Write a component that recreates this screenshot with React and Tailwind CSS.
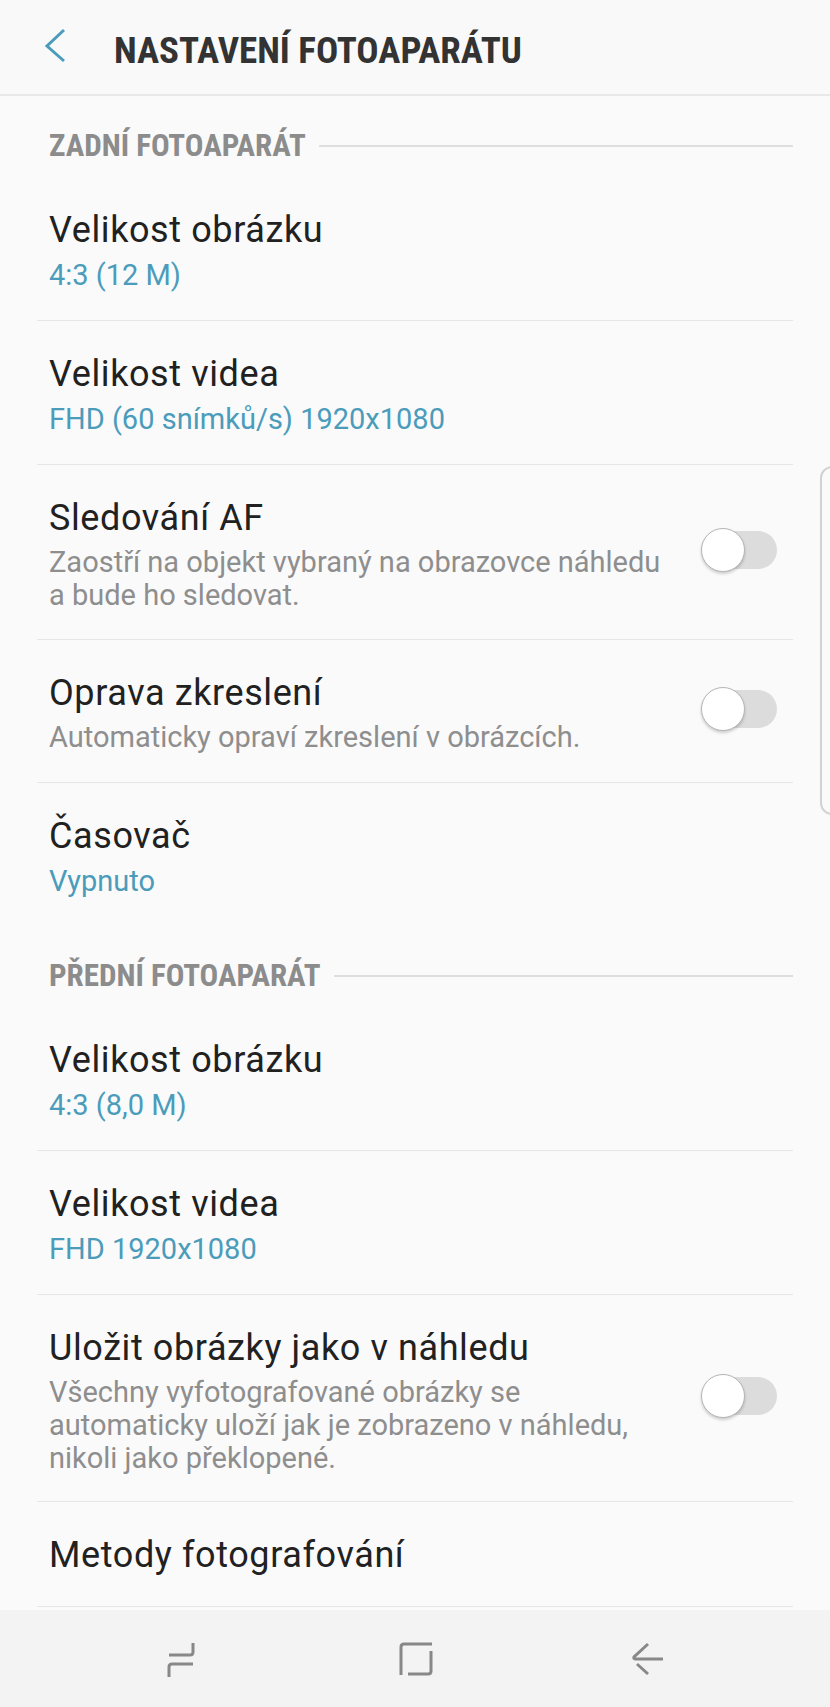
import React from "react";

const TEAL = "text-[#4b9cba]";
const CONDENSED = '"Roboto Condensed", "Liberation Sans Narrow", "DejaVu Sans Condensed", Roboto, sans-serif';

function Toggle() {
  return (
    <div className="relative w-[76px] h-[44px] shrink-0 mr-[16px] mb-[4px]">
      <div className="absolute left-[4px] right-0 top-[3px] h-[38px] rounded-full bg-[#dcdcdc]" />
      <div className="absolute left-0 top-0 w-[44px] h-[44px] rounded-full bg-white border border-[#b5b5b5] shadow-[0_2px_3px_rgba(0,0,0,0.18)]" />
    </div>
  );
}

function SectionHeader({ title }) {
  return (
    <div className="h-[81px] pt-[32px] pl-[49px] pr-[37px]">
      <div className="flex items-center h-[36px]">
        <span
          className="text-[31px] font-bold leading-[36px] text-[#8c8c8c] whitespace-nowrap"
          style={{ fontFamily: CONDENSED }}
        >
          {title}
        </span>
        <div className="flex-1 h-[2px] bg-[#dedede] ml-[13px]" />
      </div>
    </div>
  );
}

function Item({ title, value, desc, toggle, divider = true, pb = "pb-[28px]" }) {
  return (
    <div className={`mx-[37px] flex items-center ${divider ? "border-b border-[#e6e6e6]" : ""}`}>
      <div className={`flex-1 pl-[12px] pt-[33px] ${pb}`}>
        <div className="text-[36px] tracking-[0.6px] leading-[40px] text-[#212121] whitespace-nowrap">{title}</div>
        {value && <div className={`mt-[8px] text-[29px] leading-[34px] ${TEAL}`}>{value}</div>}
        {desc && <div className="mt-[8px] text-[29px] leading-[33px] text-[#8e8e8e] max-w-[618px]">{desc}</div>}
      </div>
      {toggle && <Toggle />}
    </div>
  );
}

function RecentIcon() {
  return (
    <svg width="40" height="40" viewBox="0 0 40 40" fill="none" stroke="#888" strokeWidth="3">
      <path d="M5 16 H26 Q29 16 29 13 V4" />
      <path d="M29 25 H8 Q5 25 5 28 V38" />
    </svg>
  );
}

function HomeIcon() {
  return (
    <svg width="40" height="40" viewBox="0 0 40 40" fill="none" stroke="#888" strokeWidth="3">
      <path d="M5 36 V8 Q5 5 8 5 H36" />
      <path d="M35 12 V32 Q35 35 32 35 H12" />
    </svg>
  );
}

function BackIcon() {
  return (
    <svg width="40" height="40" viewBox="0 0 40 40" fill="none" stroke="#888" strokeWidth="3">
      <path d="M20 5 L6 18 Q5 20 8 20 H35" />
      <path d="M9 25 L20 35" />
    </svg>
  );
}

export default function App() {
  return (
    <div
      className="relative w-[830px] h-[1707px] flex flex-col bg-[#fafafa] overflow-hidden"
      style={{ fontFamily: "Roboto, 'Noto Sans', sans-serif" }}
    >
      {/* header */}
      <div className="h-[96px] shrink-0 flex items-center border-b-2 border-[#e8e8e8] bg-[#f9f9f9]">
        <svg width="24" height="36" viewBox="0 0 24 36" className="ml-[43px] mb-[2px]" fill="none" stroke="#4b9cba" strokeWidth="3">
          <path d="M21 2 L4 18 L21 33" />
        </svg>
        <h1
          className="ml-[47px] mt-[6px] text-[37px] font-bold text-[#333] leading-none"
          style={{ fontFamily: CONDENSED }}
        >
          NASTAVENÍ FOTOAPARÁTU
        </h1>
      </div>

      <div className="flex-1 overflow-hidden">
        <SectionHeader title="ZADNÍ FOTOAPARÁT" />
        <Item title="Velikost obrázku" value="4:3 (12 M)" />
        <Item title="Velikost videa" value="FHD (60 snímků/s) 1920x1080" />
        <Item
          title="Sledování AF"
          desc="Zaostří na objekt vybraný na obrazovce náhledu a bude ho sledovat."
          toggle
          pb="pb-[27px]"
        />
        <Item title="Oprava zkreslení" desc="Automaticky opraví zkreslení v obrázcích." toggle />
        <Item title="Časovač" value="Vypnuto" divider={false} />

        <SectionHeader title="PŘEDNÍ FOTOAPARÁT" />
        <Item title="Velikost obrázku" value="4:3 (8,0 M)" />
        <Item title="Velikost videa" value="FHD 1920x1080" />
        <Item
          title="Uložit obrázky jako v náhledu"
          desc="Všechny vyfotografované obrázky se automaticky uloží jak je zobrazeno v náhledu, nikoli jako překlopené."
          toggle
          pb="pb-[26px]"
        />
        <Item title="Metody fotografování" pb="pb-[31px]" />
      </div>

      {/* nav bar */}
      <div className="h-[97px] shrink-0 bg-[#f3f3f3] flex items-center">
        <div className="w-[40px] h-[40px] ml-[164px]"><RecentIcon /></div>
        <div className="w-[40px] h-[40px] ml-[192px]"><HomeIcon /></div>
        <div className="w-[40px] h-[40px] ml-[192px]"><BackIcon /></div>
      </div>

      {/* edge handle */}
      <div className="absolute right-[-6px] top-[466px] h-[349px] w-[16px] rounded-l-[12px] border-2 border-[#d2d2d2]" />
    </div>
  );
}
